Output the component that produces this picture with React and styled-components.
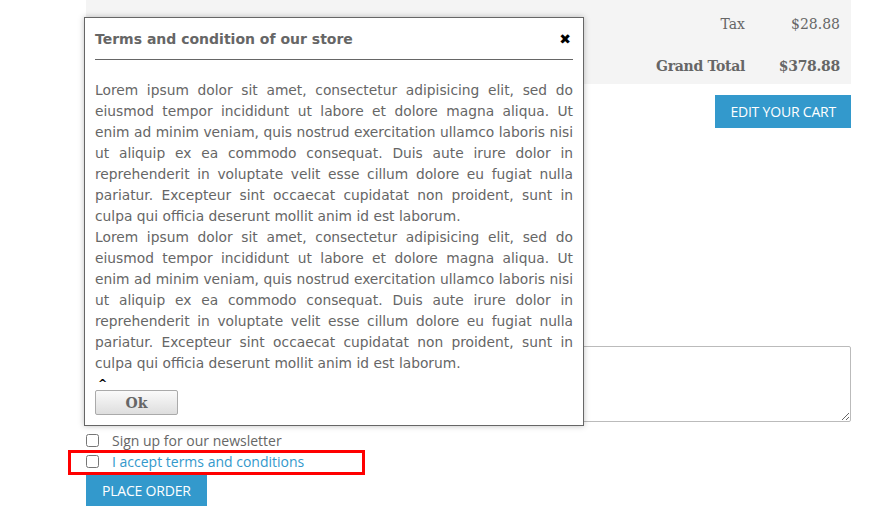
import React from 'react'
import styled, { createGlobalStyle } from 'styled-components'

const GlobalStyle = createGlobalStyle`
  html, body { margin: 0; padding: 0; background: #fff; }
  body { font-family: "Open Sans", "Liberation Sans", sans-serif; }
`

const lorem = [
  'Lorem ipsum dolor sit amet, consectetur adipisicing elit, sed do',
  'eiusmod tempor incididunt ut labore et dolore magna aliqua. Ut',
  'enim ad minim veniam, quis nostrud exercitation ullamco laboris nisi',
  'ut aliquip ex ea commodo consequat. Duis aute irure dolor in',
  'reprehenderit in voluptate velit esse cillum dolore eu fugiat nulla',
  'pariatur. Excepteur sint occaecat cupidatat non proident, sunt in',
  'culpa qui officia deserunt mollit anim id est laborum.',
]

function App() {
  return (
    <>
      <GlobalStyle />
      <Page>
        <Summary>
          <SumRow>
            <SumLabel>Tax</SumLabel>
            <SumValue>$28.88</SumValue>
          </SumRow>
          <SumRow bold>
            <SumLabel>Grand Total</SumLabel>
            <SumValue>$378.88</SumValue>
          </SumRow>
        </Summary>
        <CartRow>
          <BlueButton>EDIT YOUR CART</BlueButton>
        </CartRow>
        <Comments />
        <CheckRow>
          <input type="checkbox" />
          <CheckLabel>Sign up for our newsletter</CheckLabel>
        </CheckRow>
        <CheckRow highlight>
          <input type="checkbox" />
          <CheckLabel link>I accept terms and conditions</CheckLabel>
        </CheckRow>
        <BlueButton place>PLACE ORDER</BlueButton>

        <Modal>
          <ModalHead>
            <ModalTitle>Terms and condition of our store</ModalTitle>
            <Close>✖</Close>
          </ModalHead>
          <ModalBody>
            {[0, 1].map(p => (
              <div key={p}>
                {lorem.map((line, i) => (
                  <Line key={i} last={i === lorem.length - 1}>{line}</Line>
                ))}
              </div>
            ))}
          </ModalBody>
          <Caret>^</Caret>
          <OkButton>Ok</OkButton>
        </Modal>
      </Page>
    </>
  )
}

export default App

const Page = styled.div`
  position: relative;
  width: 765px;
  margin-left: 86px;
  height: 520px;
`

const Summary = styled.div`
  background: #f4f4f4;
  height: 84px;
  padding: 3px 11px 0 0;
  display: flex;
  flex-direction: column;
  box-sizing: border-box;
`

const SumRow = styled.div`
  flex: 0 0 42px;
  display: flex;
  justify-content: flex-end;
  align-items: center;
  font-family: "DejaVu Serif", Georgia, serif;
  font-size: 14px;
  color: #666;
  font-weight: ${p => (p.bold ? 700 : 400)};
  letter-spacing: ${p => (p.bold ? '-0.3px' : '0')};
`

const SumLabel = styled.span``

const SumValue = styled.span`
  width: 95px;
  text-align: right;
`

const CartRow = styled.div`
  display: flex;
  justify-content: flex-end;
  margin-top: 11px;
`

const BlueButton = styled.button`
  background: #3399cc;
  color: #fff;
  border: none;
  height: ${p => (p.place ? 31 : 33)}px;
  margin-top: ${p => (p.place ? 3 : 0)}px;
  padding: 0 ${p => (p.place ? 16 : 15)}px;
  font-family: "Open Sans", sans-serif;
  font-size: 14px;
  letter-spacing: -0.2px;
  cursor: pointer;
`

const Comments = styled.textarea`
  display: block;
  box-sizing: border-box;
  width: 765px;
  height: 76px;
  margin-top: 218px;
  border: 1px solid #bbb;
  border-radius: 2px;
`

const CheckRow = styled.label`
  position: relative;
  display: flex;
  align-items: center;
  height: 22px;
  margin-top: ${p => (p.highlight ? -1 : 7)}px;
  input {
    margin: 0 13px 0 0;
    width: 13px;
    height: 13px;
  }
  ${p =>
    p.highlight &&
    `
    &::after {
      content: '';
      position: absolute;
      left: -18px;
      top: 0;
      width: 297px;
      height: 25px;
      border: 3px solid #f00;
      box-sizing: border-box;
      pointer-events: none;
    }
  `}
`

const CheckLabel = styled.span`
  font-family: "Open Sans", sans-serif;
  font-size: 14px;
  color: ${p => (p.link ? '#3399cc' : '#666')};
`

const Modal = styled.div`
  position: absolute;
  left: -2px;
  top: 17px;
  width: 500px;
  height: 409px;
  box-sizing: border-box;
  background: #fff;
  border: 1px solid #666;
  box-shadow: 0 0 6px rgba(0, 0, 0, 0.25);
  padding: 0 10px;
  display: flex;
  flex-direction: column;
  font-family: "DejaVu Sans", Verdana, sans-serif;
  color: #666;
`

const ModalHead = styled.div`
  display: flex;
  justify-content: space-between;
  align-items: center;
  height: 41px;
  border-bottom: 1px solid #666;
`

const ModalTitle = styled.h3`
  margin: 0;
  font-size: 14px;
  font-weight: 700;
  color: #666;
`

const Close = styled.span`
  color: #000;
  font-size: 14px;
  margin-right: 2px;
`

const ModalBody = styled.div`
  margin-top: 20px;
  font-size: 13.8px;
  line-height: 21px;
`

const Line = styled.div`
  text-align: justify;
  text-align-last: ${p => (p.last ? 'left' : 'justify')};
  white-space: nowrap;
`

const Caret = styled.div`
  color: #000;
  font-size: 11px;
  font-weight: 700;
  line-height: 12px;
  margin: 4px 0 0 3px;
`

const OkButton = styled.button`
  width: 83px;
  height: 25px;
  margin-top: 0;
  border: 1px solid #aaa;
  border-radius: 2px;
  background: linear-gradient(#fafafa, #dedede);
  font-family: "DejaVu Serif", Georgia, serif;
  font-weight: 700;
  font-size: 14px;
  color: #666;
  padding: 0;
`
